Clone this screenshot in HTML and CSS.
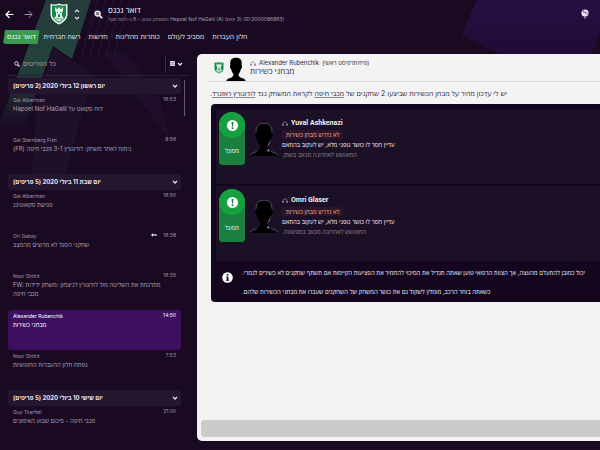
FILE: index.html
```html
<!DOCTYPE html>
<html lang="he">

<head>
  <meta charset="UTF-8">
  <meta name="viewport" content="width=device-width, initial-scale=1.0">
  <title>דואר נכנס</title>
  <link rel="stylesheet" href="styles.css">
</head>

<body>
  <!-- shared shapes -->
  <svg class="defs" width="0" height="0" aria-hidden="true">
    <symbol id="chevron" viewBox="0 0 6 4">
      <path d="M1 1l2 2 2-2" fill="none" stroke="currentColor" stroke-width="1.3" />
    </symbol>
    <symbol id="headphones" viewBox="0 0 6 5">
      <path d="M1 4.500V2.500C1 .4 5 .4 5 2.500V4.500" fill="none" stroke="currentColor" stroke-width=".6" opacity=".7" />
      <path d="M.5 3h1v1.700h-1zM4.500 3h1v1.700h-1z" fill="currentColor" opacity=".7" />
    </symbol>
    <symbol id="club" viewBox="0 0 18 22">
      <path d="M.5 1Q5 2 9 .5 13 2 17.500 1V12Q17 18 9 21.500 1 18 .5 12z" fill="#e9f5ec" />
      <path d="M2 2.500Q6 3 9 2 12 3 16 2.500V12Q15.500 16.500 9 19.800 2.500 16.500 2 12z" fill="#16884a" />
      <path d="M5 4.500h1.500v1.500h1.500v-1.500h2v1.500h1.500v-1.500H13v3.500l-1 1v4l2 2.500Q11.500 17.500 9 18.500 6.500 17.500 4 15.500l2-2.500V9L5 8z" fill="#dff2e5" />
      <path d="M8 14v-2a1 1 0 0 1 2 0v2zM7 9h1v1H7zM10 9h1v1h-1zM5.500 15.500h7v.8h-7z" fill="#16884a" />
    </symbol>
    <symbol id="person" viewBox="0 0 28 34">
      <path d="M0 34Q1 31 7 29.500Q10.500 28 10.500 24Q7.500 21 7 17Q5 16 5.500 12.500L6 11C5 4 8 1 14 1S23 4 22 11L22.500 12.500Q23 16 21 17Q20.500 21 17.500 24Q17.500 28 21 29.500Q27 31 28 34z" fill="#000" />
    </symbol>
  </svg>

  <svg class="backdrop" viewBox="0 0 600 450" preserveAspectRatio="none" aria-hidden="true">
    <defs>
      <linearGradient id="green" x1="0" y1="0" x2="0" y2="1">
        <stop offset="0" stop-color="#263b3c" />
        <stop offset=".5" stop-color="#22433c" />
        <stop offset="1" stop-color="#190a22" />
      </linearGradient>
      <linearGradient id="violet" x1="0" y1="0" x2="0" y2="1">
        <stop offset="0" stop-color="#270f43" />
        <stop offset="1" stop-color="#200c36" />
      </linearGradient>
    </defs>
    <path d="M46 0H91L72 59 53 46 24 128H0V122z" fill="url(#green)" />
    <path d="M53 48L95 76 84 105 62 190 30 190 38 100z" fill="#291d37" opacity=".35" />
    <path d="M104 54L125 52 160 100 170 140z" fill="#2a1b3c" opacity=".3" />
    <path d="M98 0l-16 54M106 0L90 54M114 0L98 54M122 0l-16 54M130 0l-16 54" stroke="#2d173e" stroke-width="2" opacity=".5" />
    <path d="M477 0L462 35 500 54H591L600 32V0z" fill="url(#violet)" />
  </svg>

  <header class="topbar">
    <div class="history">
      <button class="icon-btn" aria-label="אחורה">
        <svg width="9" height="9" viewBox="0 0 9 9"><path d="M8.500 4.500H1M4.500 1L1 4.500 4.500 8" fill="none" stroke="#fff" stroke-width="1.200" /></svg>
      </button>
      <button class="icon-btn" aria-label="קדימה">
        <svg width="9" height="9" viewBox="0 0 9 9"><path d="M.5 4.500H8M4.500 1L8 4.500 4.500 8" fill="none" stroke="#9c90a5" stroke-width="1" /></svg>
      </button>
    </div>
    <svg class="crest" width="18" height="22"><use href="#club" /></svg>
    <button class="icon-btn switcher" aria-label="החלפת קבוצה">
      <svg width="6" height="11" viewBox="0 0 6 11"><path d="M1 3l2-2 2 2M1 8l2 2 2-2" fill="none" stroke="#e5dfe9" stroke-width="1.200" /></svg>
    </button>
    <button class="icon-btn search-btn" aria-label="חיפוש">
      <svg width="9" height="9" viewBox="0 0 9 9"><circle cx="3.600" cy="3.600" r="2.600" fill="#8b8192" stroke="#fff" stroke-width="1.200" /><path d="M5.500 5.500L8.300 8.300" stroke="#fff" stroke-width="1.600" /></svg>
    </button>
    <div class="heading">
      <h1>דואר נכנס</h1>
      <p>המשחק הבא: - 6 ב-ליגת חעל Hapoel Nof HaGalil (A) <bdi dir="rtl">(3 ימים)</bdi> (ID:2000086863)</p>
    </div>
    <button class="icon-btn world" aria-label="עולם">
      <svg width="8" height="10" viewBox="0 0 8 10"><circle cx="4" cy="4" r="3.600" fill="#eee8f3" /><path d="M1.500 2.500l1.200-1.200.8.9-1 1.300zM3.300 3.200l1.700-.7.6 1.300-1.300 1zM6 4.300l1 .2-.6 1.300-.9-.4z" fill="#5d4770" /><path d="M3 7.500h2L4.500 9.500h-1z" fill="#b9a9c7" /></svg>
    </button>
  </header>

  <nav class="tabs">
    <a class="active" href="#">דואר נכנס</a>
    <a href="#">רשת חברתית</a>
    <a href="#">חדשות</a>
    <a href="#">כותרות מהליגות</a>
    <a href="#">מסביב לעולם</a>
    <a href="#">חלון העברות</a>
  </nav>

  <div class="layout">
    <aside class="inbox">
      <div class="filter">
        <label for="filter">
          <svg width="6" height="6" viewBox="0 0 6 6"><circle cx="2.400" cy="2.400" r="1.700" fill="none" stroke="#ddd6e2" stroke-width="1" /><path d="M3.700 3.700L5.500 5.500" stroke="#ddd6e2" stroke-width="1.300" /></svg>
        </label>
        <input id="filter" type="text" placeholder="כל הפריטים" aria-label="סינון פריטים">
        <button class="icon-btn view" aria-label="תצוגה">
          <svg width="5" height="5" viewBox="0 0 5 5"><path d="M0 0h5v5H0z" fill="#d5cdda" /><path d="M0 1.700h5M0 3.400h5" stroke="#6c6076" stroke-width=".4" /></svg>
          <svg width="6" height="4"><use href="#chevron" /></svg>
        </button>
      </div>

      <div class="list">
        <button class="group"><span>יום ראשון 12 ביולי 2020 (2 פריטים)</span><svg width="6" height="4"><use href="#chevron" /></svg></button>
        <a class="mail" href="#">
          <span class="from">Gal Alberman</span><time>16:53</time>
          <span class="subject" dir="rtl">דוח סקאוט על Hapoel Nof HaGalil</span>
        </a>
        <a class="mail" href="#">
          <span class="from">Gal Sternberg Fish</span><time>8:56</time>
          <span class="subject" dir="rtl">ניתוח לאחר משחק: לודוגורץ 3-1 מכבי חיפה (FR)</span>
        </a>

        <button class="group"><span>יום שבת 11 ביולי 2020 (5 פריטים)</span><svg width="6" height="4"><use href="#chevron" /></svg></button>
        <a class="mail" href="#">
          <span class="from">Gal Alberman</span><time>16:50</time>
          <span class="subject" dir="rtl">פגישת סקאוטינג</span>
        </a>
        <a class="mail" href="#">
          <span class="from">Ori Gabay</span>
          <svg class="reply" width="6" height="4" viewBox="0 0 6 4"><path d="M0 2l2-1.700v1h2.500Q6 1.500 6 3 5 2.200 2 2.500V3.700z" fill="#eee" /></svg>
          <time>16:38</time>
          <span class="subject" dir="rtl">שחקני הסגל לא מרוצים מהמצב</span>
        </a>
        <a class="mail" href="#">
          <span class="from">Naor Shitrit</span><time>16:35</time>
          <span class="subject">FW: מתרגמת את השליטה מול לודוגורץ לניצחון :משחק ידידות מכבי חיפה</span>
        </a>
        <a class="mail selected" href="#">
          <span class="from">Alexander Rubenchik</span><time>14:50</time>
          <span class="subject" dir="rtl">מבחני כשירות</span>
        </a>
        <a class="mail" href="#">
          <span class="from">Naor Shitrit</span><time>7:53</time>
          <span class="subject" dir="rtl">נפתח חלון ההעברות החופשיות</span>
        </a>

        <button class="group"><span>יום שישי 10 ביולי 2020 (5 פריטים)</span><svg width="6" height="4"><use href="#chevron" /></svg></button>
        <a class="mail" href="#">
          <span class="from">Guy Tsarfati</span><time>21:00</time>
          <span class="subject" dir="rtl">מכבי חיפה - סיכום שבוע האימונים</span>
        </a>
      </div>
    </aside>

    <main class="message">
      <div class="message-head">
        <svg class="small-crest" width="12" height="14" viewBox="0 0 18 22"><use href="#club" /></svg>
        <svg width="20" height="24" viewBox="0 0 28 34"><use href="#person" /></svg>
        <div>
          <p class="sender"><svg width="6" height="5"><use href="#headphones" /></svg>Alexander Rubenchik <span>(פיזיותרפיסט ראשי)</span></p>
          <h2>מבחני כשירות</h2>
        </div>
      </div>

      <p class="intro" dir="rtl">יש לי עדכון מהיר על מבחן הכשירות שביצעו 2 שחקנים של <a href="#">מכבי חיפה</a> לקראת המשחק נגד <a href="#">לודוגורץ ראזגרד</a>.</p>

      <section class="report">
        <article class="player">
          <div class="status">
            <div class="disc"><svg width="11" height="11" viewBox="0 0 11 11"><circle cx="5.500" cy="5.500" r="5.500" fill="#fff" /><path d="M4.600 2h1.800l-.3 4.500H4.900zM4.700 7.300h1.600v1.600H4.700z" fill="#12803a" /></svg></div>
            <span>מסוגל</span>
          </div>
          <svg class="face" width="28" height="34" viewBox="0 0 28 34"><use href="#person" /><path d="M0 33Q2 30.500 7 29.500M21 29.500Q26 30.500 28 33M6 10C6 3.500 9 1.200 14 1.200S22 3.500 22 10" /><path class="shine" d="M21 17Q20 22 17 25L19 21zM18 27l2 2.500-3-.5z" /></svg>
          <div class="details">
            <h3><svg width="6" height="5"><use href="#headphones" /></svg>Yuval Ashkenazi</h3>
            <span class="chip">לא נדרש מבחן כשירות</span>
            <p dir="rtl">עדיין חסר לו כושר גופני מלא, יש לעקוב בהתאם</p>
            <p class="dim" dir="rtl">התאושש לאחרונה מכאב בשוק.</p>
          </div>
        </article>
        <article class="player">
          <div class="status">
            <div class="disc"><svg width="11" height="11" viewBox="0 0 11 11"><circle cx="5.500" cy="5.500" r="5.500" fill="#fff" /><path d="M4.600 2h1.800l-.3 4.500H4.900zM4.700 7.300h1.600v1.600H4.700z" fill="#12803a" /></svg></div>
            <span>מסוגל</span>
          </div>
          <svg class="face" width="28" height="34" viewBox="0 0 28 34"><use href="#person" /><path d="M0 33Q2 30.500 7 29.500M21 29.500Q26 30.500 28 33M6 10C6 3.500 9 1.200 14 1.200S22 3.500 22 10" /><path class="shine" d="M21 17Q20 22 17 25L19 21zM18 27l2 2.500-3-.5z" /></svg>
          <div class="details">
            <h3><svg width="6" height="5"><use href="#headphones" /></svg>Omri Glaser</h3>
            <span class="chip">לא נדרש מבחן כשירות</span>
            <p dir="rtl">עדיין חסר לו כושר גופני מלא, יש לעקוב בהתאם</p>
            <p class="dim" dir="rtl">התאושש לאחרונה מכאב במפשעה.</p>
          </div>
        </article>
        <div class="note">
          <svg width="11" height="11" viewBox="0 0 11 11"><circle cx="5.500" cy="5.500" r="5.300" fill="#fff" /><path d="M4.700 2h1.700v1.500H4.700zM4.200 4.500h2.200v3.200h.8v1H4v-1h.8V5.500h-.6z" fill="#160820" /></svg>
          <div>
            <p dir="rtl">יכול כמובן להתעלם מהעצה, אך הצוות הרפואי טוען שאתה תגדיל את הסיכוי להחמיר את הפציעות הקיימות אם תשתף שחקנים לא כשירים לגמרי.</p>
            <p dir="rtl">כשאתה בוחר הרכב, מומלץ לשקול גם את כושר המשחק של השחקנים שעברו את מבחני הכשירות שלהם.</p>
          </div>
        </div>
      </section>

      <div class="actions"></div>
    </main>
  </div>
</body>

</html>
```
FILE: styles.css
```css
* {
  box-sizing: border-box;
}

body {
  margin: 0;
  height: 100vh;
  display: flex;
  flex-direction: column;
  font-family: Inter, "Open Sans", "Liberation Sans", sans-serif;
  font-size: 6px;
  line-height: 10px;
  background-color: #190a22;
  color: #e8e2ec;
  overflow: hidden;
}

h1, h2, h3, p {
  margin: 0;
  font-weight: normal;
}

a {
  color: inherit;
  text-decoration: none;
}

svg {
  display: block;
  flex-shrink: 0;
}

button, input {
  font: inherit;
  color: inherit;
  background: none;
  border: none;
  padding: 0;
}

.defs {
  position: absolute;
}

.backdrop {
  position: absolute;
  inset: 0;
  width: 100%;
  height: 100%;
  z-index: -1;
}

.icon-btn {
  display: flex;
  align-items: center;
  cursor: pointer;
}

/* top bar */
.topbar {
  display: flex;
  align-items: center;
  height: 28px;
  padding: 0 11px 0 5px;
}

.history {
  display: flex;
  gap: 10px;
}

.crest {
  margin-left: 17px;
}

.switcher {
  margin-left: 6px;
}

.search-btn {
  margin: 0 5px 0 14px;
}

.heading {
  flex: 1;
  white-space: nowrap;
}

.heading h1 {
  font-size: 8px;
  line-height: 10px;
  color: #fff;
}

.heading p {
  font-size: 5px;
  line-height: 8px;
  color: #a99db1;
}

.tabs {
  display: flex;
  align-items: center;
  gap: 8px;
  height: 18px;
  padding-left: 3px;
  font-size: 7px;
  white-space: nowrap;
}

.tabs a {
  line-height: 14px;
}

.tabs .active {
  padding: 0 4px;
  margin-right: -4px;
  background: #3c9a50;
  border-radius: 3px;
  clip-path: polygon(2px 0, 100% 0, calc(100% - 2px) 100%, 0 100%);
  color: #fff;
}

.layout {
  flex: 1;
  min-height: 0;
  display: grid;
  grid-template-columns: 197px minmax(0, 1fr);
  grid-template-rows: minmax(0, 1fr);
  padding: 8px 0 9px;
}

/* mail list */
.inbox {
  padding: 0 8px;
}

.filter {
  display: flex;
  align-items: center;
  height: 22px;
  margin-bottom: 2px;
  padding: 0 0 2px 6px;
  border-bottom: 1px solid #2e2038;
}

.filter input {
  flex: 1;
  min-width: 0;
  padding-left: 3px;
  font-size: 7px;
  outline: none;
}

.filter input::placeholder {
  color: #a59bad;
}

.view {
  gap: 2px;
  height: 18px;
  padding: 0 6px 0 4px;
  border-left: 1px solid #3a2a45;
}

.list {
  padding-right: 8px;
  background: linear-gradient(#655a6d, #655a6d) right 4px top 2px / 1px 36px no-repeat;
}

.group {
  display: flex;
  align-items: center;
  justify-content: space-between;
  width: 100%;
  height: 16px;
  padding: 0 3px 0 5px;
  font-weight: bold;
  background: #24162e;
  border-radius: 3px;
  cursor: pointer;
}

.group span {
  direction: rtl;
}

.mail {
  display: grid;
  grid-template-columns: 1fr auto auto;
  grid-template-rows: 10px auto;
  align-content: start;
  column-gap: 6px;
  height: 40px;
  padding: 0 5px;
  color: #b0a6b8;
}

.from, .mail time {
  font-size: 5px;
  line-height: 12px;
  color: #a095a8;
}

.mail time {
  grid-column: 3;
  line-height: 10px;
}

.reply {
  align-self: center;
}

.subject {
  grid-column: 1 / -1;
  padding-right: 8px;
  line-height: 9px;
  text-align: left;
}

.selected {
  background: #3d105f;
  border-radius: 3px;
}

.selected, .selected .from, .selected time {
  color: #fff;
}

/* open message */
.message {
  display: flex;
  flex-direction: column;
  background: #f3f3f3;
  border-radius: 5px 0 0 5px;
  color: #35293f;
  overflow: hidden;
}

.message-head {
  display: flex;
  align-items: flex-end;
  height: 28px;
  margin-left: 11px;
  padding-left: 5px;
  border-bottom: 1px solid #d9dbe0;
}

.small-crest {
  align-self: center;
  margin-right: 1px;
}

.message-head div {
  align-self: center;
  padding-left: 4px;
}

.message-head h2 {
  font-size: 8px;
  line-height: 9px;
}

.sender {
  display: flex;
  align-items: center;
  gap: 3px;
  font-size: 6px;
  line-height: 8px;
}

.intro {
  padding: 7px 0 5px 13px;
  text-align: left;
  white-space: nowrap;
  font-size: 7px;
}

.intro a {
  text-decoration: underline;
  text-decoration-color: #8d8594;
}

.report {
  margin-left: 14px;
  padding: 5px 0 0 5px;
  background: #150620;
  border-radius: 4px 0 0 4px;
  color: #f3eff5;
  overflow: hidden;
}

.player {
  display: flex;
  height: 75px;
  margin-bottom: 2px;
  padding: 3px;
  background: #1c1027;
}

.status {
  width: 26px;
  height: 53px;
  background: #198040;
  border-radius: 13px 13px 3px 3px;
  text-align: center;
}

.disc {
  display: flex;
  align-items: center;
  justify-content: center;
  height: 26px;
  margin-bottom: 8px;
  background: #17a13e;
  border-radius: 50%;
}

.face {
  margin: 10px 4px 0 5px;
  stroke: #57505c;
  stroke-width: 1;
  fill: none;
}

.face use {
  stroke: none;
}

.face .shine {
  fill: #aaa3ad;
  stroke: none;
}

.details {
  padding-top: 6px;
}

.details h3 {
  display: flex;
  align-items: center;
  gap: 3px;
  font-family: Roboto, sans-serif;
  font-size: 7px;
  font-weight: bold;
}

.details p {
  text-align: left;
  white-space: nowrap;
}

.chip {
  display: block;
  width: fit-content;
  margin: 2px 0 1px;
  padding: 0 4px;
  line-height: 9px;
  background: #2c152c;
  border-radius: 2px;
  color: #f0a878;
}

.details .dim {
  color: #8e8496;
}

.note {
  display: flex;
  align-items: flex-start;
  gap: 9px;
  height: 39px;
  padding: 9px 0 0 6px;
}

.note div {
  flex: none;
  width: max-content;
  margin-top: -4px;
}

.note p {
  margin-bottom: 9px;
  text-align: left;
  white-space: nowrap;
}

.actions {
  height: 17px;
  margin: auto 0 4px 4px;
  background: #cbcbcb;
  border-radius: 3px 0 0 3px;
}
```
